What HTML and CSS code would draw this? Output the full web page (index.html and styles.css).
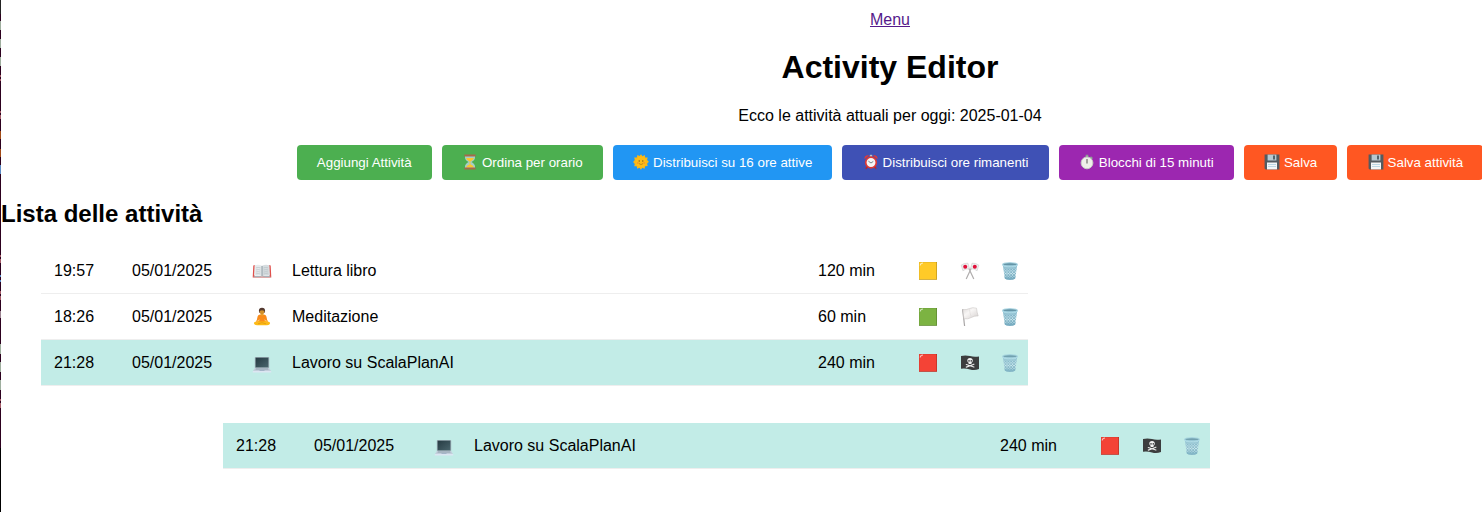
FILE: index.html
```html
<!DOCTYPE html>
<html lang="it">
<head>
<meta charset="utf-8">
<title>Activity Editor</title>
<link rel="stylesheet" href="styles.css">
</head>
<body>
<svg class="sprite" aria-hidden="true">
  <defs>
    <linearGradient id="screen" x1="0" y1="0" x2="1" y2="1"><stop offset="0" stop-color="#263b43"/><stop offset="1" stop-color="#49646c"/></linearGradient>
    <linearGradient id="glass" x1="0" y1="0" x2="0" y2="1"><stop offset="0" stop-color="#a0cddd"/><stop offset=".6" stop-color="#d2eaf1"/><stop offset="1" stop-color="#7fb2c5"/></linearGradient>
    <linearGradient id="cloth" x1="0" y1="0" x2="1" y2="1"><stop offset="0" stop-color="#dcd8d7"/><stop offset=".4" stop-color="#f8f6f5"/><stop offset="1" stop-color="#d5d0cf"/></linearGradient>
    <pattern id="mesh" width="2.8" height="2.8" patternUnits="userSpaceOnUse"><path d="M0 0L2.800 2.800M2.800 0L0 2.800" stroke="#5f9db4" stroke-width=".6"/></pattern>
  </defs>
  <symbol id="book" viewBox="0 -.5 20 20">
    <path d="M1.300 4L3 3.500v11l7 .5 7-.5v-11l1.700.5 .6 12H.700z" fill="#e0504c"/>
    <path d="M1.800 14.800Q6 13.600 10 15.500Q14 13.600 18.200 14.800L18.500 15.700H1.500z" fill="#a8b3b9"/>
    <path d="M2.600 3.800Q7 2.700 10 4.400V15Q6.500 13.400 2 14.300z" fill="#e6ebed"/>
    <path d="M17.400 3.800Q13 2.700 10 4.400V15Q13.500 13.400 18 14.300z" fill="#d6dde0"/>
    <path d="M10 4.400V15" stroke="#84939b" stroke-width=".9"/>
    <path d="M4 6.300q2.500-.6 4.600.1M4 8.400q2.500-.6 4.600.1M3.800 10.500q2.500-.6 4.800.1M3.700 12.400q2.500-.6 4.900.1M11.500 6.400q2-.7 4.500-.1M11.500 8.500q2-.7 4.600-.1M11.500 10.600q2-.7 4.700-.1M11.500 12.500q2-.7 4.900-.1" fill="none" stroke="#b0babf" stroke-width=".6"/>
  </symbol>
  <symbol id="meditate" viewBox="0 0 20 20">
    <path d="M2 16.600Q1.600 15 3.600 14.700L8 13.500h4l4.400 1.200q2 .3 1.600 1.900-.4 1.700-2.800 1.700H5q-2.600 0-3-1.700z" fill="#fdbb15"/>
    <path d="M6 16.800l4-1.100 4 1.100" fill="none" stroke="#dc9013" stroke-width=".7"/>
    <path d="M5.600 9.500Q5.800 7.700 8 7.400h4Q14.200 7.700 14.400 9.500l.9 3.900-1.500.9-1-2.300v2.500H7.200V12l-1 2.300-1.500-.9z" fill="#f98c1b"/>
    <path d="M4.600 13l1.700.6-.7 1.600-2 .2zM15.400 13l-1.700.6.7 1.600 2 .2z" fill="#fbb03b"/>
    <path d="M8.700 6.500h2.600v1.300L10 9 8.700 7.800z" fill="#e9a32d"/>
    <path d="M6.900 4Q6.900.8 10 .8T13.100 4L12.400 6H7.600z" fill="#543930"/>
    <ellipse cx="10" cy="4.700" rx="2.300" ry="2.500" fill="#d1912c"/>
    <path d="M7.800 3.700Q10 3 12.200 3.700L11.500 1.700H8.500z" fill="#543930"/>
  </symbol>
  <symbol id="laptop" viewBox="0 -1.500 20 20">
    <rect x="2.800" y="2.500" width="14.400" height="11.300" rx=".7" fill="#9eb0b8"/>
    <rect x="3.600" y="3.200" width="12.800" height="9.600" fill="url(#screen)"/>
    <path d="M2.800 13.500h14.400L19.200 17H.8z" fill="#c3cedb"/>
    <path d="M4 13.900h12l.6 1.100H3.400z" fill="#8c9caa"/>
    <path d="M7.700 15.500h4.600l.4 1H7.300z" fill="#a4b4c8"/>
    <path d="M.8 16.500h18.400v1.500H.8z" fill="#dce6f2"/>
  </symbol>
  <symbol id="square" viewBox="0 0 20 20">
    <path d="M1 1h18v17.800H1z" fill="currentColor"/>
    <path d="M18.200 1H19v17.800H1V18h17.200z" fill="#000" opacity=".22"/>
    <path d="M1 1h18v.7H1.700V18H1z" fill="#000" opacity=".08"/>
    <path d="M2.200 4.500Q2.400 2.200 5 2" fill="none" stroke="#fff" stroke-width="1.100" opacity=".65"/>
  </symbol>
  <symbol id="crossed" viewBox="0 -.5 20 20">
    <path d="M7 3l6.800 14.500M13 3L6.200 17.500" stroke="#b0adad" stroke-width="1.200"/>
    <path d="M1.200 3.600Q4 1.300 8 1.700L9.500 7.300Q5.500 6.900 2.900 9.300zM18.800 3.600Q16 1.300 12 1.700L10.500 7.300Q14.500 6.900 17.100 9.300z" fill="#ededed" stroke="#c4c4c4" stroke-width=".5"/>
    <circle cx="5.200" cy="5.300" r="2" fill="#e0103a"/><circle cx="14.800" cy="5.300" r="2" fill="#e0103a"/>
  </symbol>
  <symbol id="whiteflag" viewBox="0 0 20 20">
    <path d="M2.600 2.200L4.600 19" stroke="#a8a5a5" stroke-width="1.200"/>
    <path d="M2.800 2.500Q6.500 3 9.500 1.500T16.500 1.200Q17 5.500 18.200 9Q14.600 8.500 11.300 10.500T3.900 11.800z" fill="url(#cloth)" stroke="#c3bebd" stroke-width=".5"/>
    <path d="M9.500 2.200q.4 4.500 1.700 7.500" stroke="#dedad9" stroke-width=".6" fill="none"/>
  </symbol>
  <symbol id="pirate" viewBox="0 0 20 20">
    <path d="M1 3Q5.500 1.800 10 3.100T19 3.400V16Q14.500 17.700 10 16.400T1 15.700z" fill="#3c3d3e"/>
    <path d="M6.300 11.500l7.600 2.500M13.900 11.200l-7.600 2.900" stroke="#e8e8e8" stroke-width="1.200" stroke-linecap="round"/>
    <path d="M7.300 7.500q0-2.600 2.700-2.600t2.800 2.600q0 1.700-1.300 2.300V11H8.600V9.800Q7.300 9.200 7.300 7.500z" fill="#f2f2f2"/>
    <circle cx="9" cy="7.900" r=".8" fill="#3c3d3e"/><circle cx="11.300" cy="7.900" r=".8" fill="#3c3d3e"/>
  </symbol>
  <symbol id="trash" viewBox="0 0 20 20">
    <path d="M2.800 3.500h14.400L15.300 17q-.4 1.700-5.300 1.700T4.700 17z" fill="url(#glass)"/>
    <path d="M2.800 3.500h14.400L15.300 17q-.4 1.700-5.300 1.700T4.700 17z" fill="url(#mesh)"/>
    <path d="M4.600 16.500q5.400 1.600 10.800 0L15.300 17q-.4 1.700-5.300 1.700T4.700 17z" fill="#79adc2"/>
    <ellipse cx="10" cy="3.300" rx="7.300" ry="1.600" fill="#6595a7" stroke="#a0d0df" stroke-width="1.100"/>
    <path d="M2.600 4q1 1.800 7.400 1.800T17.400 4" fill="none" stroke="#b1dce8" stroke-width="1.100"/>
  </symbol>
  <symbol id="hourglass" viewBox="0 0 16 16">
    <path d="M3 2h10v1.500q0 2.500-3.500 4.500 3.500 2 3.500 4.500V14H3v-1.500Q3 10 6.500 8 3 6 3 3.500z" fill="#a6cec5"/>
    <path d="M4 4h8Q11.200 6 8.300 7.600h-.6Q4.800 6 4 4zM7.600 7h.8v3.200q3.200 1.200 3.600 3.400H4q.4-2.200 3.600-3.400z" fill="#fbc72d"/>
    <path d="M2.400.6h11.200v1.800H2.400zM2.400 13.600h11.200v1.800H2.400z" fill="#a56a4a"/>
  </symbol>
  <symbol id="sun" viewBox="0 0 16 16">
    <path d="M8 .3l1.500 1.900 2.200-1.100.5 2.400 2.500 0-.6 2.400 1.800 1.900-1.800 1.900.6 2.400-2.500.2-.7 2.400-2.200-1L8 15.800l-1.500-2-2.300 1-.5-2.500-2.500 0 .6-2.400L.1 8l1.700-2-.6-2.400 2.600-.1.6-2.400 2.200 1z" fill="#fcb714"/>
    <circle cx="8" cy="8" r="5.300" fill="#fdbd16"/>
    <circle cx="6.200" cy="7" r=".65" fill="#7a4d1c"/><circle cx="9.800" cy="7" r=".65" fill="#7a4d1c"/>
    <path d="M5.800 9.500Q8 11.600 10.200 9.500" fill="none" stroke="#b27516" stroke-width=".7"/>
    <circle cx="4.700" cy="9" r=".9" fill="#f6982c"/><circle cx="11.300" cy="9" r=".9" fill="#f6982c"/>
  </symbol>
  <symbol id="alarm" viewBox="0 0 16 16">
    <path d="M4.500 12.500l-1.700 2.300M11.500 12.500l1.700 2.300" stroke="#b72a2a" stroke-width="1.700"/>
    <path d="M1.500 5.200Q1 1 6 1.400zM14.500 5.200Q15 1 10 1.400z" fill="#e03a37"/>
    <path d="M6.800.8h2.400v2H6.800z" fill="#b7c3c9"/>
    <circle cx="8" cy="8.500" r="5.300" fill="#f5f5f5" stroke="#dd3935" stroke-width="1.700"/>
    <path d="M5.400 7.200L8 9l2.300-1.600" fill="none" stroke="#67757c" stroke-width=".9"/>
  </symbol>
  <symbol id="stopwatch" viewBox="0 0 16 16">
    <path d="M6.700.8h2.600v2.400H6.700zM12 2.300l2 1.600-1.500 1.800-2-1.600z" fill="#8d9c93"/>
    <circle cx="8" cy="8.900" r="5.900" fill="#eef0e9" stroke="#c6cdc6" stroke-width="1"/>
    <path d="M8 5v4.600" stroke="#70706b" stroke-width="1.200"/>
  </symbol>
  <symbol id="floppy" viewBox="0 0 16 16">
    <path d="M.6.600h14.800v14.800H1.600l-1-1z" fill="#535b60"/>
    <path d="M3.600.600h8.800v5.900H3.600z" fill="#b6c9d2"/>
    <path d="M9 1.400h2v4H9z" fill="#52636c"/>
    <path d="M3 8.500h10v6.900H3z" fill="#f4f6f7"/>
    <path d="M4 10.500h8M4 12.500h8" stroke="#a3cbdd" stroke-width=".7"/>
  </symbol>
</svg>

<div class="page">
  <header class="header">
    <a class="menu" href="#">Menu</a>
    <h1 class="title">Activity Editor</h1>
    <p class="intro">Ecco le attività attuali per oggi: 2025-01-04</p>
    <div class="toolbar">
      <button class="btn green">Aggiungi Attività</button>
      <button class="btn green"><svg class="glyph"><use href="#hourglass"/></svg> Ordina per orario</button>
      <button class="btn blue"><svg class="glyph"><use href="#sun"/></svg> Distribuisci su 16 ore attive</button>
      <button class="btn indigo"><svg class="glyph"><use href="#alarm"/></svg> Distribuisci ore rimanenti</button>
      <button class="btn purple"><svg class="glyph"><use href="#stopwatch"/></svg> Blocchi di 15 minuti</button>
      <button class="btn orange"><svg class="glyph"><use href="#floppy"/></svg> Salva</button>
      <button class="btn orange"><svg class="glyph"><use href="#floppy"/></svg> Salva attività</button>
    </div>
  </header>

  <h2 class="subtitle">Lista delle attività</h2>
  <ul class="list">
    <li class="row"><span>19:57</span><span>05/01/2025</span><svg class="icon"><use href="#book"/></svg><span>Lettura libro</span><span>120 min</span><svg class="icon yellow"><use href="#square"/></svg><svg class="icon"><use href="#crossed"/></svg><svg class="icon"><use href="#trash"/></svg></li>
    <li class="row"><span>18:26</span><span>05/01/2025</span><svg class="icon"><use href="#meditate"/></svg><span>Meditazione</span><span>60 min</span><svg class="icon lime"><use href="#square"/></svg><svg class="icon"><use href="#whiteflag"/></svg><svg class="icon"><use href="#trash"/></svg></li>
    <li class="row active"><span>21:28</span><span>05/01/2025</span><svg class="icon"><use href="#laptop"/></svg><span>Lavoro su ScalaPlanAI</span><span>240 min</span><svg class="icon red"><use href="#square"/></svg><svg class="icon"><use href="#pirate"/></svg><svg class="icon faded"><use href="#trash"/></svg></li>
  </ul>
</div>

<div class="row active dragged"><span>21:28</span><span>05/01/2025</span><svg class="icon"><use href="#laptop"/></svg><span>Lavoro su ScalaPlanAI</span><span>240 min</span><svg class="icon red"><use href="#square"/></svg><svg class="icon"><use href="#pirate"/></svg><svg class="icon faded"><use href="#trash"/></svg></div>
<div class="edge"></div>
</body>
</html>
```
FILE: styles.css
```css
* { box-sizing: border-box; }
html { overflow: hidden; }
body {
  margin: 0;
  height: 512px;
  overflow: hidden;
  background: #fff;
  color: #000;
  font: 16px/18px "Liberation Sans", Arial, sans-serif;
}
.sprite { position: absolute; width: 0; height: 0; }
.page { width: 1778px; margin-left: 1px; padding-top: 11px; }
.header { display: flex; flex-direction: column; align-items: center; }
.menu { color: #551a8b; text-decoration: underline; }
.title { margin: 20px 0 21px; font-size: 32px; line-height: 37px; }
.intro { margin: 0 0 20px; }
.toolbar { display: flex; gap: 10px; }
.btn {
  height: 35px;
  padding: 10px 20px;
  border: 0;
  border-radius: 4px;
  color: #fff;
  font: 13.333px/15px "Liberation Sans", Arial, sans-serif;
  white-space: nowrap;
}
.glyph { width: 16px; height: 16px; margin: -1px .3px 0 .3px; vertical-align: -3px; }
.green { background: #4caf50; }
.blue { background: #2196f3; }
.indigo { background: #3f51b5; }
.purple { background: #9c27b0; }
.orange { background: #ff5722; }
.subtitle { margin: 20px 0; font-size: 24px; line-height: 28px; }
.list { margin: 0; padding: 0 0 0 40px; list-style: none; }
.row {
  display: grid;
  grid-template-columns: 78px 120px 40px 526px 100px 42px 40px 20px;
  align-items: center;
  width: 987px;
  height: 46px;
  padding-left: 13px;
  border-bottom: 1px solid #eee;
}
.active { background: #c2ece7; }
.dragged { position: absolute; left: 223px; top: 423px; }
.icon { display: block; width: 20px; height: 20px; }
.yellow { color: #ffca28; }
.lime { color: #7cb342; }
.red { color: #f44336; }
.faded { opacity: .85; }
.edge {
  position: absolute;
  left: 0;
  top: 0;
  width: 1px;
  height: 512px;
  background: linear-gradient(#222 0 14px, #2c001e 14px 21px, #9eae9e 21px 30px, #2c001e 30px 39px, #9eae9e 39px 48px, #2c001e 48px 57px, #9eae9e 57px 66px, #2c001e 66px 75px, #a45b67 75px 77px, #2c001e 77px 79px, #a45b67 79px 81px, #2c001e 81px 111px, #a45b67 111px 113px, #2c001e 113px 115px, #a45b67 115px 119px, #2c001e 119px 131px, #a14a16 131px 139px, #2c001e 139px 149px, #a14a16 149px 157px, #2c001e 157px 165px, #5b8bc5 165px 174px, #2c001e 174px 255px, #a45b67 255px 257px, #2c001e 257px 259px, #a45b67 259px 263px, #2c001e 263px 275px, #5b8bc5 275px 277px, #2c001e 277px 280px, #5b8bc5 280px 282px, #2c001e 282px 291px, #a45b67 291px 294px, #2c001e 294px 296px, #a45b67 296px 300px, #2c001e 300px 311px, #9b8290 311px 318px, #2c001e 318px 344px, #9eae9e 344px 354px, #2c001e 354px 362px, #9eae9e 362px 372px, #2c001e 372px 380px, #9eae9e 380px 390px, #2c001e 390px 399px, #a45b67 399px 401px, #2c001e 401px 403px, #a45b67 403px 408px, #2c001e 408px 448px, #000 448px);
}
```
